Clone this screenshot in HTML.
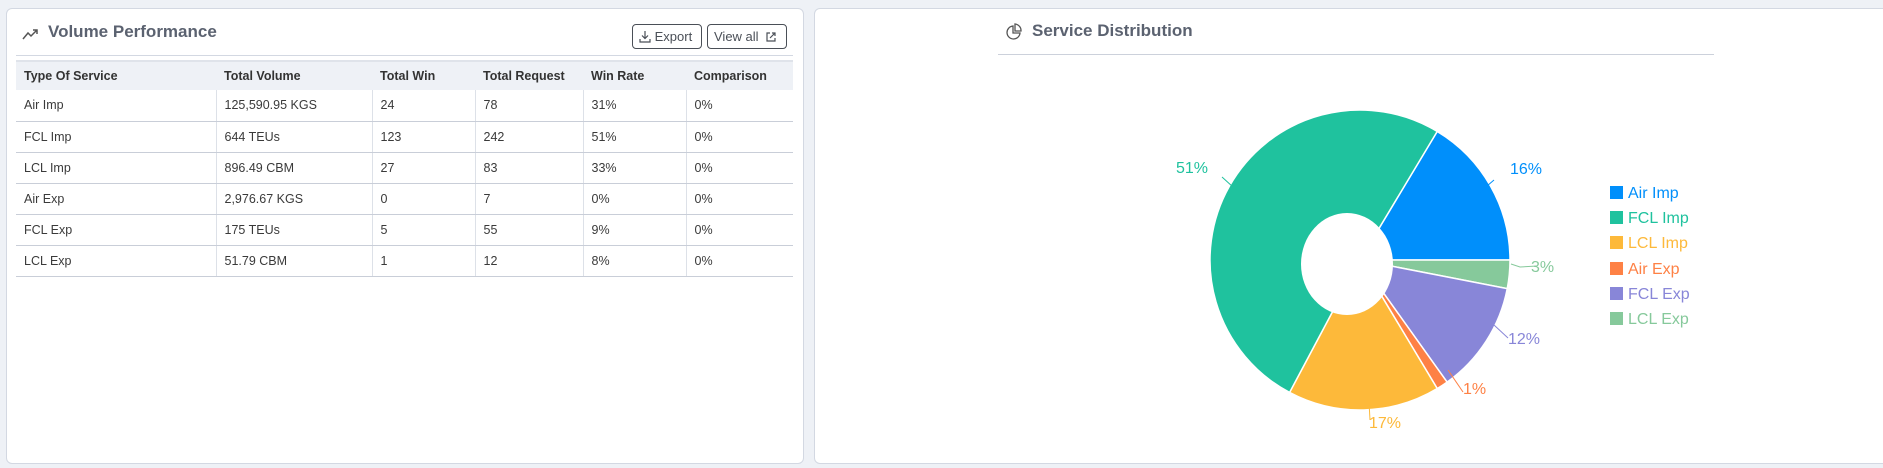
<!DOCTYPE html>
<html><head><meta charset="utf-8"><style>
*{box-sizing:border-box;margin:0;padding:0}
body{width:1883px;height:468px;background:#eef1f6;font-family:"Liberation Sans",sans-serif;position:relative;overflow:hidden;color:#333}
.card{position:absolute;background:#fff;border:1px solid #d3d8e2;border-radius:6px}
.title{position:absolute;font-size:17px;font-weight:bold;color:#5b6270}
.btn{position:absolute;top:24px;height:25px;border:1px solid #4a4f57;border-radius:4px;font-size:13px;color:#4a4f57;padding:4px 6px;white-space:nowrap}
table{position:absolute;left:16px;top:60px;width:777px;border-collapse:collapse;font-size:12.5px}
th{background:#eef1f6;text-align:left;font-weight:bold;height:29px;padding:0 8px;color:#333}
td{height:31px;padding:0 8px;border-bottom:1px solid #c9ced8;border-right:1px solid #dde1e8;color:#3a3a3a}
td:last-child{border-right:none}
tr:first-child th{border-top:2px solid #dfe3ea}
.lg{position:absolute;left:1610px;font-size:16px;height:20px;line-height:20px}
.lg i{display:inline-block;width:13px;height:13px;margin-right:5px;vertical-align:-1px}
.pl{position:absolute;font-size:16px}
</style></head><body>
<div class="card" style="left:6px;top:8px;width:798px;height:456px"></div>
<svg style="position:absolute;left:22px;top:27px" width="18" height="14" viewBox="0 0 18 14"><path d="M1 12 L6 6 L9 9 L15 3 M11 3 H15 V7" stroke="#555" stroke-width="1.5" fill="none"/></svg>
<div class="title" style="left:48px;top:22px">Volume Performance</div>
<div class="btn" style="left:632px;width:70px"><svg width="12" height="13" viewBox="0 0 12 13" style="vertical-align:-2px"><path d="M6 1 V8 M3 5.5 L6 8.5 L9 5.5 M1 9 V12 H11 V9" stroke="#4a4f57" stroke-width="1.2" fill="none"/></svg> Export</div>
<div class="btn" style="left:707px;width:80px">View all <svg width="12" height="12" viewBox="0 0 12 12" style="vertical-align:-2px;margin-left:3px"><path d="M5 2 H2 V10 H10 V7 M7 2 H10 V5 M10 2 L5 7" stroke="#4a4f57" stroke-width="1.2" fill="none"/></svg></div>
<div style="position:absolute;left:16px;top:55px;width:777px;height:1px;background:#d3d8e2"></div>
<table>
<tr><th style="width:200px">Type Of Service</th><th style="width:156px">Total Volume</th><th style="width:103px">Total Win</th><th style="width:108px">Total Request</th><th style="width:103px">Win Rate</th><th>Comparison</th></tr>
<tr><td>Air Imp</td><td>125,590.95 KGS</td><td>24</td><td>78</td><td>31%</td><td>0%</td></tr>
<tr><td>FCL Imp</td><td>644 TEUs</td><td>123</td><td>242</td><td>51%</td><td>0%</td></tr>
<tr><td>LCL Imp</td><td>896.49 CBM</td><td>27</td><td>83</td><td>33%</td><td>0%</td></tr>
<tr><td>Air Exp</td><td>2,976.67 KGS</td><td>0</td><td>7</td><td>0%</td><td>0%</td></tr>
<tr><td>FCL Exp</td><td>175 TEUs</td><td>5</td><td>55</td><td>9%</td><td>0%</td></tr>
<tr><td>LCL Exp</td><td>51.79 CBM</td><td>1</td><td>12</td><td>8%</td><td>0%</td></tr>
</table>

<div class="card" style="left:814px;top:8px;width:1080px;height:456px"></div>
<svg style="position:absolute;left:1006px;top:23px" width="16" height="18" viewBox="0 0 16 18"><path d="M7 3 A6.5 6.5 0 1 0 14 10 H7 Z" stroke="#555" stroke-width="1.3" fill="none"/><path d="M9 1 A6.5 6.5 0 0 1 15 8 H9 Z" stroke="#555" stroke-width="1.3" fill="none"/></svg>
<div class="title" style="left:1032px;top:21px">Service Distribution</div>
<div style="position:absolute;left:998px;top:54px;width:716px;height:1px;background:#ccd1db"></div>

<svg style="position:absolute;left:0;top:0" width="1883" height="468">
<g id="donut"></g>
<g fill="none" stroke-width="1">
<path d="M1222 177 L1233 187" stroke="#1fc29e"/>
<path d="M1494 180 L1480 192" stroke="#008ffb"/>
<path d="M1511 264 L1520 267 L1537 266" stroke="#86c99b"/>
<path d="M1494 325 L1508 338" stroke="#8886d8"/>
<path d="M1448 370 L1463 392" stroke="#fe8145"/>
<path d="M1369 402 L1370 420" stroke="#fdb93a"/>
</g>
</svg>
<script>
var cx=1360,cy=260,R=150;
var segs=[[31,90,"#008ffb"],[90,101,"#86c99b"],[101,144.5,"#8886d8"],[144.5,149,"#fe8145"],[149,208,"#fdb93a"],[208,391,"#1fc29e"]];
var g=document.getElementById("donut"),ns="http://www.w3.org/2000/svg";
function pt(a){var r=a*Math.PI/180;return [cx+R*Math.sin(r),cy-R*Math.cos(r)];}
segs.forEach(function(s){var p=document.createElementNS(ns,"path");var a=pt(s[0]),b=pt(s[1]);var lg=(s[1]-s[0])>180?1:0;
p.setAttribute("d","M"+cx+" "+cy+" L"+a[0]+" "+a[1]+" A"+R+" "+R+" 0 "+lg+" 1 "+b[0]+" "+b[1]+" Z");p.setAttribute("fill",s[2]);p.setAttribute("stroke","#fff");p.setAttribute("stroke-width","1.5");g.appendChild(p);});
var e=document.createElementNS(ns,"ellipse");e.setAttribute("cx",1347);e.setAttribute("cy",264);e.setAttribute("rx",46);e.setAttribute("ry",51);e.setAttribute("fill","#fff");g.appendChild(e);
</script>
<div class="pl" style="left:1176px;top:160px;color:#1fc29e">51%</div>
<div class="pl" style="left:1510px;top:161px;color:#008ffb">16%</div>
<div class="pl" style="left:1531px;top:259px;color:#86c99b">3%</div>
<div class="pl" style="left:1508px;top:331px;color:#8886d8">12%</div>
<div class="pl" style="left:1463px;top:381px;color:#fe8145">1%</div>
<div class="pl" style="left:1369px;top:415px;color:#fdb93a">17%</div>
<div class="lg" style="top:184px;color:#008ffb"><i style="background:#008ffb"></i>Air Imp</div>
<div class="lg" style="top:209px;color:#1fc29e"><i style="background:#1fc29e"></i>FCL Imp</div>
<div class="lg" style="top:234px;color:#fdb93a"><i style="background:#fdb93a"></i>LCL Imp</div>
<div class="lg" style="top:260px;color:#fe8145"><i style="background:#fe8145"></i>Air Exp</div>
<div class="lg" style="top:285px;color:#8886d8"><i style="background:#8886d8"></i>FCL Exp</div>
<div class="lg" style="top:310px;color:#86c99b"><i style="background:#86c99b"></i>LCL Exp</div>
</body></html>
